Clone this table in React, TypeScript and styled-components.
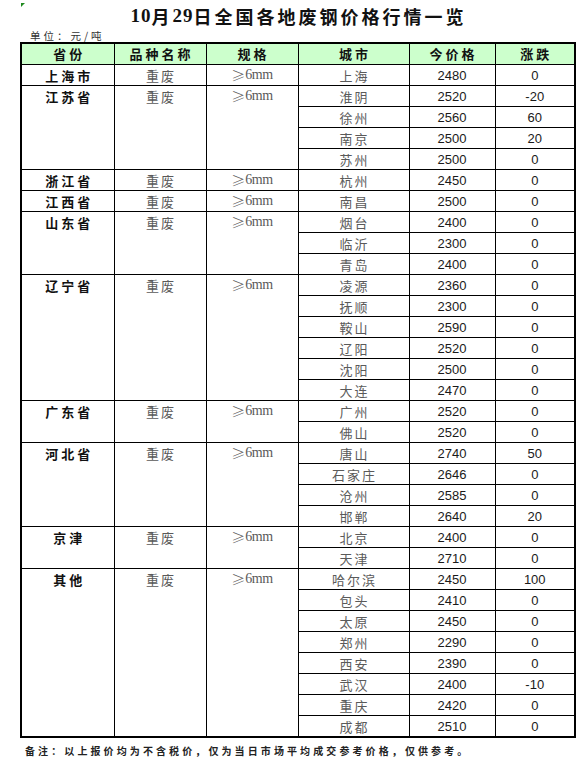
import React from "react";
import styled, { createGlobalStyle } from "styled-components";

const GlobalStyle = createGlobalStyle`
  html, body { margin: 0; padding: 0; background: #ffffff; }
  body { font-family: "Liberation Sans", "Noto Sans CJK SC", sans-serif; color: #000; }
`;

type City = { name: string; price: number; change: number };
type Group = { province: string; kind: string; cities: City[] };

const groups: Group[] = [
  { province: "上海市", kind: "重废", cities: [{ name: "上海", price: 2480, change: 0 }] },
  {
    province: "江苏省", kind: "重废", cities: [
      { name: "淮阴", price: 2520, change: -20 },
      { name: "徐州", price: 2560, change: 60 },
      { name: "南京", price: 2500, change: 20 },
      { name: "苏州", price: 2500, change: 0 },
    ],
  },
  { province: "浙江省", kind: "重废", cities: [{ name: "杭州", price: 2450, change: 0 }] },
  { province: "江西省", kind: "重废", cities: [{ name: "南昌", price: 2500, change: 0 }] },
  {
    province: "山东省", kind: "重废", cities: [
      { name: "烟台", price: 2400, change: 0 },
      { name: "临沂", price: 2300, change: 0 },
      { name: "青岛", price: 2400, change: 0 },
    ],
  },
  {
    province: "辽宁省", kind: "重废", cities: [
      { name: "凌源", price: 2360, change: 0 },
      { name: "抚顺", price: 2300, change: 0 },
      { name: "鞍山", price: 2590, change: 0 },
      { name: "辽阳", price: 2520, change: 0 },
      { name: "沈阳", price: 2500, change: 0 },
      { name: "大连", price: 2470, change: 0 },
    ],
  },
  {
    province: "广东省", kind: "重废", cities: [
      { name: "广州", price: 2520, change: 0 },
      { name: "佛山", price: 2520, change: 0 },
    ],
  },
  {
    province: "河北省", kind: "重废", cities: [
      { name: "唐山", price: 2740, change: 50 },
      { name: "石家庄", price: 2646, change: 0 },
      { name: "沧州", price: 2585, change: 0 },
      { name: "邯郸", price: 2640, change: 20 },
    ],
  },
  {
    province: "京津", kind: "重废", cities: [
      { name: "北京", price: 2400, change: 0 },
      { name: "天津", price: 2710, change: 0 },
    ],
  },
  {
    province: "其他", kind: "重废", cities: [
      { name: "哈尔滨", price: 2450, change: 100 },
      { name: "包头", price: 2410, change: 0 },
      { name: "太原", price: 2450, change: 0 },
      { name: "郑州", price: 2290, change: 0 },
      { name: "西安", price: 2390, change: 0 },
      { name: "武汉", price: 2400, change: -10 },
      { name: "重庆", price: 2420, change: 0 },
      { name: "成都", price: 2510, change: 0 },
    ],
  },
];

const Page = styled.div`
  width: 585px;
  height: 772px;
  box-sizing: border-box;
  padding: 0 0 0 20px;
  display: flex;
  flex-direction: column;
  position: relative;
`;

const Marker = styled.div`
  position: absolute;
  left: 21px;
  top: 3px;
  width: 0;
  height: 0;
  border-top: 4px solid #1f8a1f;
  border-right: 4px solid transparent;
`;

const Title = styled.h1`
  margin: 0;
  height: 30px;
  width: 557px;
  display: flex;
  align-items: center;
  justify-content: center;
  font-family: "Liberation Serif", "Noto Sans CJK SC", serif;
  font-weight: bold;
  font-size: 18px;
  letter-spacing: 3px;
  color: #111;
  padding-top: 2px;
  box-sizing: border-box;
`;

const Digits = styled.span`
  font-family: "Liberation Serif", serif;
  font-weight: bold;
  font-size: 19px;
  letter-spacing: 1px;
`;

const Unit = styled.div`
  height: 12px;
  line-height: 12px;
  padding-left: 10px;
  font-family: "Noto Sans CJK SC", sans-serif;
  font-size: 10.5px;
  letter-spacing: 3px;
  color: #333;
`;

const Table = styled.table`
  border-collapse: collapse;
  table-layout: fixed;
  width: 554px;
  border: 2px solid #000;
`;

const HeadCell = styled.th`
  background: #ccffcc;
  height: 20px;
  padding: 0;
  border: 1px solid #000;
  font-family: "Noto Sans CJK SC", sans-serif;
  font-weight: bold;
  font-size: 13px;
  line-height: 20px;
  letter-spacing: 3px;
  text-indent: 3px;
  color: #111;
  text-align: center;
  vertical-align: middle;
`;

type CellKind = "province" | "kind" | "spec" | "city" | "num";

const Cell = styled.td<{ $kind: CellKind }>`
  height: 20px;
  padding: 0;
  border: 1px solid #000;
  vertical-align: ${(p) => (p.$kind === "province" || p.$kind === "kind" || p.$kind === "spec" ? "top" : "middle")};
  font-family: ${(p) =>
    p.$kind === "num"
      ? `"Liberation Sans", sans-serif`
      : p.$kind === "spec"
      ? `"Liberation Serif", serif`
      : `"Noto Sans CJK SC", sans-serif`};
  font-size: 13px;
  font-weight: ${(p) => (p.$kind === "province" ? "bold" : "normal")};
  letter-spacing: ${(p) => (p.$kind === "province" ? "3px" : p.$kind === "kind" || p.$kind === "city" ? "2px" : "0")};
  color: ${(p) =>
    p.$kind === "province" ? "#111" : p.$kind === "num" ? "#1a1a1a" : "#5a5a5a"};
`;

const CellLine = styled.div<{ $indent?: number }>`
  height: 20px;
  overflow: hidden;
  display: flex;
  align-items: center;
  justify-content: center;
  white-space: nowrap;
  padding-left: ${(p) => p.$indent ?? 0}px;
`;

const GeSign = styled.span`
  font-family: "Noto Sans CJK SC", sans-serif;
  font-size: 14px;
  font-weight: 300;
`;

const Mm = styled.span`
  font-family: "Liberation Serif", serif;
  font-size: 14px;
  letter-spacing: -0.5px;
`;

const Note = styled.div`
  padding: 5px 0 0 5px;
  font-family: "Noto Sans CJK SC", sans-serif;
  font-weight: bold;
  font-size: 10px;
  letter-spacing: 3.1px;
  color: #222;
`;

function formatChange(n: number): string {
  return n < 0 ? `-${Math.abs(n)}` : String(n);
}

export default function App() {
  return (
    <>
      <GlobalStyle />
      <Page>
        <Marker />
        <Title>
          <Digits>10</Digits>月<Digits>29</Digits>日全国各地废钢价格行情一览
        </Title>
        <Unit>单位：元/吨</Unit>
        <Table>
          <colgroup>
            <col style={{ width: 93 }} />
            <col style={{ width: 92 }} />
            <col style={{ width: 92 }} />
            <col style={{ width: 111 }} />
            <col style={{ width: 86 }} />
            <col style={{ width: 80 }} />
          </colgroup>
          <thead>
            <tr>
              <HeadCell>省份</HeadCell>
              <HeadCell>品种名称</HeadCell>
              <HeadCell>规格</HeadCell>
              <HeadCell>城市</HeadCell>
              <HeadCell>今价格</HeadCell>
              <HeadCell>涨跌</HeadCell>
            </tr>
          </thead>
          <tbody>
            {groups.map((g) =>
              g.cities.map((c, i) => (
                <tr key={g.province + c.name}>
                  {i === 0 && (
                    <>
                      <Cell $kind="province" rowSpan={g.cities.length}>
                        <CellLine $indent={3}>{g.province}</CellLine>
                      </Cell>
                      <Cell $kind="kind" rowSpan={g.cities.length}>
                        <CellLine $indent={2}>{g.kind}</CellLine>
                      </Cell>
                      <Cell $kind="spec" rowSpan={g.cities.length}>
                        <CellLine>
                          <GeSign>≥</GeSign>
                          <Mm>6mm</Mm>
                        </CellLine>
                      </Cell>
                    </>
                  )}
                  <Cell $kind="city">
                    <CellLine $indent={2}>{c.name}</CellLine>
                  </Cell>
                  <Cell $kind="num">
                    <CellLine>{c.price}</CellLine>
                  </Cell>
                  <Cell $kind="num">
                    <CellLine>{formatChange(c.change)}</CellLine>
                  </Cell>
                </tr>
              ))
            )}
          </tbody>
        </Table>
        <Note>备注：以上报价均为不含税价，仅为当日市场平均成交参考价格，仅供参考。</Note>
      </Page>
    </>
  );
}
